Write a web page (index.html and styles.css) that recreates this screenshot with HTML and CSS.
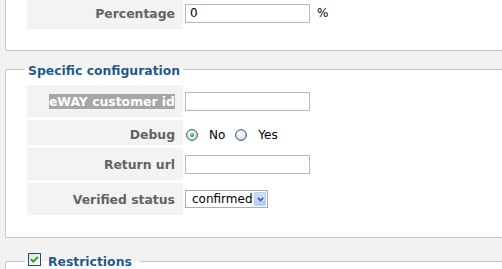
FILE: index.html
```html
<!DOCTYPE html>
<html>
<head>
<meta charset="utf-8">
<link rel="stylesheet" href="styles.css">
</head>
<body>
<div class="page">
  <fieldset class="fs fs-first">
    <div class="row">
      <div class="lbl">Percentage</div>
      <div class="val"><span class="txt">0</span><span class="unit">%</span></div>
    </div>
  </fieldset>

  <fieldset class="fs fs-config">
    <legend class="lg lg-config">Specific configuration</legend>
    <div class="rows">
      <div class="row">
        <div class="lbl"><span class="sel">eWAY customer id</span></div>
        <div class="val"><span class="txt"></span></div>
      </div>
      <div class="row row-radio">
        <div class="lbl">Debug</div>
        <div class="val">
          <span class="radio">
            <svg width="12" height="12" viewBox="0 0 12 12"><defs><radialGradient id="rg1" cx="0.4" cy="0.35" r="0.7"><stop offset="0" stop-color="#ffffff"/><stop offset="1" stop-color="#d4d6d8"/></radialGradient><radialGradient id="dot" cx="0.4" cy="0.4" r="0.6"><stop offset="0" stop-color="#7ee07e"/><stop offset="1" stop-color="#1f9a1f"/></radialGradient></defs><circle cx="6" cy="6" r="5.4" fill="url(#rg1)" stroke="#2f557f" stroke-width="1"/><circle cx="6" cy="6" r="2" fill="url(#dot)"/></svg>
          </span>
          <span class="opt">No</span>
          <span class="radio">
            <svg width="12" height="12" viewBox="0 0 12 12"><defs><radialGradient id="rg2" cx="0.4" cy="0.35" r="0.7"><stop offset="0" stop-color="#ffffff"/><stop offset="1" stop-color="#d4d6d8"/></radialGradient></defs><circle cx="6" cy="6" r="5.4" fill="url(#rg2)" stroke="#2f557f" stroke-width="1"/></svg>
          </span>
          <span class="opt">Yes</span>
        </div>
      </div>
      <div class="row">
        <div class="lbl">Return url</div>
        <div class="val"><span class="txt"></span></div>
      </div>
      <div class="row">
        <div class="lbl">Verified status</div>
        <div class="val">
          <span class="select">
            <span class="select-text">confirmed</span>
            <span class="select-btn"><svg width="7" height="5" viewBox="0 0 7 5"><path d="M0.8 0.8 L3.5 3.6 L6.2 0.8" fill="none" stroke="#3d5c95" stroke-width="1.6"/></svg></span>
          </span>
        </div>
      </div>
    </div>
  </fieldset>

  <fieldset class="fs fs-restrict">
    <legend class="lg lg-restrict"><svg class="cb" width="13" height="13" viewBox="0 0 13 13"><defs><linearGradient id="cbg" x1="0" y1="0" x2="1" y2="1"><stop offset="0" stop-color="#dcdcd6"/><stop offset="1" stop-color="#ffffff"/></linearGradient></defs><rect x="0.5" y="0.5" width="12" height="12" fill="url(#cbg)" stroke="#1c5180"/><path d="M3 6.2 L5.3 8.6 L10 3.8" fill="none" stroke="#21a121" stroke-width="1.8"/></svg>Restrictions</legend>
  </fieldset>
</div>
</body>
</html>
```
FILE: styles.css
```css
html, body {
  margin: 0;
  padding: 0;
  overflow: hidden;
}
body {
  background: #f2f2f2;
  font-family: "DejaVu Sans", Verdana, sans-serif;
  font-size: 12px;
  color: #000;
}
.page {
  width: 502px;
}
.fs {
  margin: 0 -30px 0 5px;
  padding: 7px 0 22px 21px;
  border: 1px solid #c9c9c9;
  background: #ffffff;
  min-width: 0;
}
.fs-first {
  margin-top: -3px;
  border-top: none;
  padding-top: 0;
  padding-bottom: 21px;
}
.fs-config {
  margin-top: 10px;
}
.fs-restrict {
  margin-top: 15px;
  padding-bottom: 40px;
}
.lg {
  margin-left: -2px;
  padding: 3px 3px 0 3px;
  font-weight: bold;
  font-size: 12.4px;
  line-height: 14px;
  color: #1f5a8c;
}
.lg-restrict {
  padding: 0 8px 0 3px;
}
.cb {
  display: inline-block;
  vertical-align: baseline;
  margin-right: 7px;
}
.rows {
  display: flex;
  flex-direction: column;
  gap: 3px;
}
.row {
  display: grid;
  grid-template-columns: 156px 1fr;
  column-gap: 2px;
  height: 32px;
}
.row-radio {
  height: 25px;
}
.lbl {
  background: #f3f3f3;
  display: flex;
  align-items: center;
  justify-content: flex-end;
  padding-right: 8px;
  font-weight: bold;
  font-size: 12.4px;
  color: #636363;
}
.row-radio .lbl,
.row-radio .val {
  padding-top: 4px;
}
.sel {
  background: #a6a6a6;
  color: #ffffff;
}
.val {
  display: flex;
  align-items: center;
}
.txt {
  box-sizing: border-box;
  width: 125px;
  height: 19px;
  border: 1px solid #b7b7b7;
  background: #fff;
  padding: 0 4px;
  font-size: 12px;
  line-height: 17px;
  color: #000;
}
.unit {
  margin-left: 7px;
  font-size: 12px;
}
.radio {
  display: inline-flex;
  margin-left: 1px;
}
.radio + .opt {
  margin-left: 11px;
}
.opt + .radio {
  margin-left: 10px;
}
.opt {
  font-size: 12px;
  color: #000;
}
.select {
  box-sizing: border-box;
  display: inline-flex;
  align-items: center;
  width: 83px;
  height: 18px;
  border: 1px solid #a7adb5;
  background: #fff;
  padding-right: 1px;
}
.select-text {
  flex: 1;
  padding-left: 6px;
  font-size: 12px;
  line-height: 16px;
}
.select-btn {
  box-sizing: border-box;
  width: 12px;
  height: 14px;
  border: 1px solid #bcd0f8;
  border-radius: 1px;
  background: linear-gradient(#d4e1fc, #b3c9f7);
  display: flex;
  align-items: center;
  justify-content: center;
}
```
